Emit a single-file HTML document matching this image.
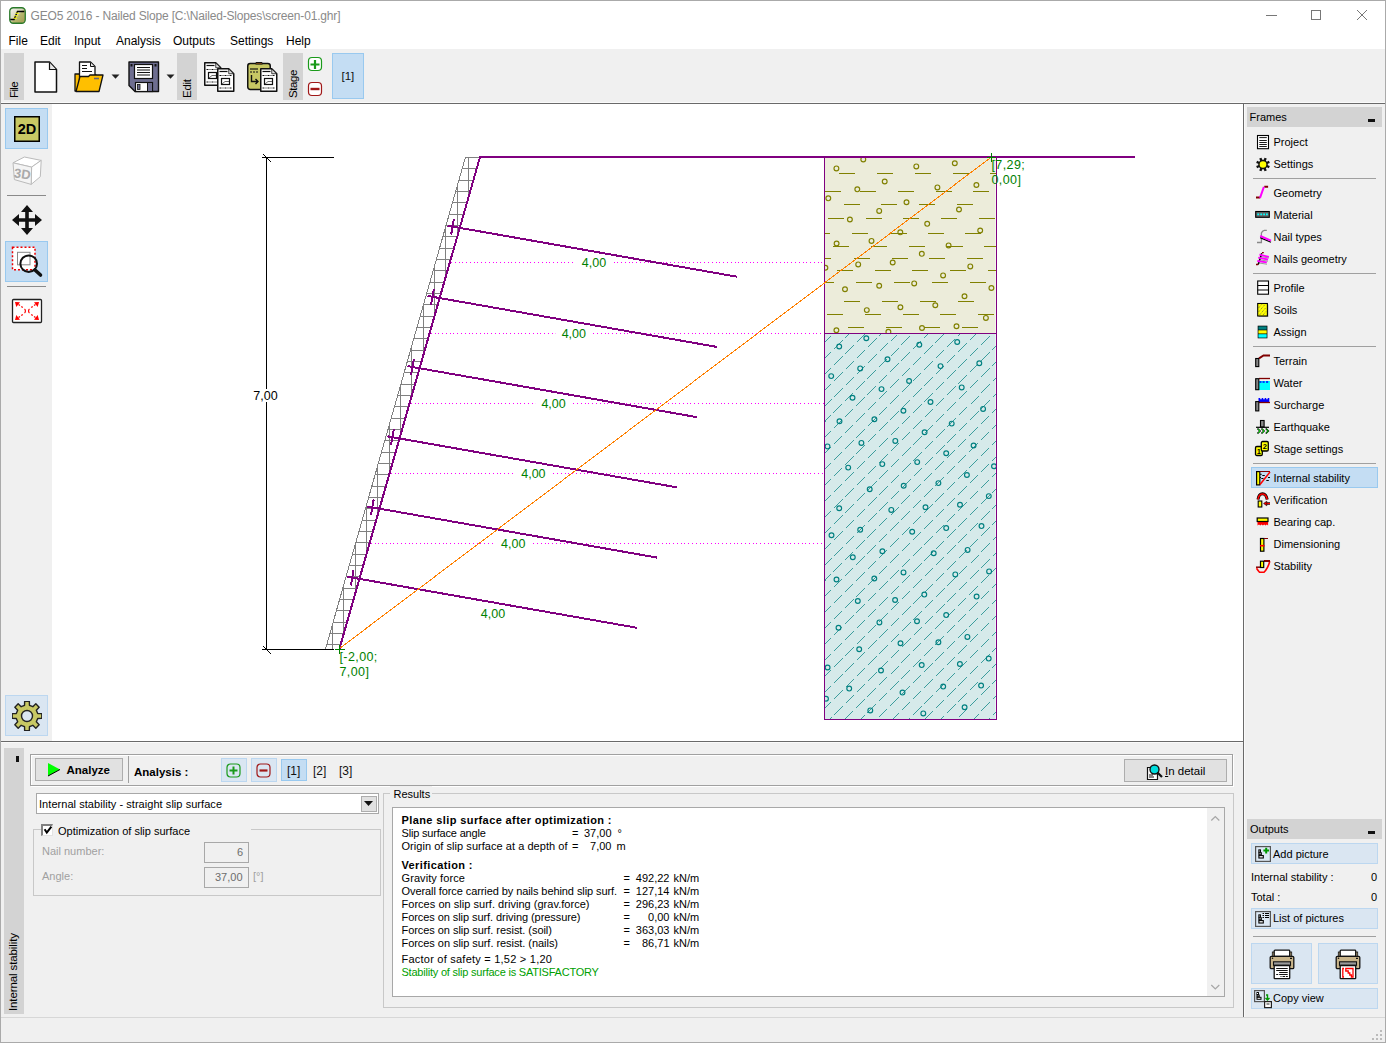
<!DOCTYPE html>
<html><head><meta charset="utf-8"><style>
html,body{margin:0;padding:0;}
body{width:1386px;height:1043px;overflow:hidden;position:relative;background:#f0f0f0;font-family:"Liberation Sans", sans-serif;}
.t{position:absolute;white-space:nowrap;line-height:1;}
</style></head><body>
<div style="position:absolute;left:0px;top:0px;width:1386px;height:49px;background:#fff"></div>
<div style="position:absolute;left:0px;top:0px;width:1386px;height:1px;background:#aaa"></div>
<div style="position:absolute;left:0px;top:0px;width:1px;height:1043px;background:#aaa"></div>
<div style="position:absolute;left:1385px;top:0px;width:1px;height:1043px;background:#aaa"></div>
<div style="position:absolute;left:0px;top:1042px;width:1386px;height:1px;background:#aaa"></div>
<svg style="position:absolute;left:9px;top:7px;" width="17" height="17" viewBox="0 0 17 17"><defs><linearGradient id="tg" x1="0" y1="0" x2="1" y2="1"><stop offset="0" stop-color="#f4f4ee"/><stop offset="0.45" stop-color="#d8d8c0"/><stop offset="0.55" stop-color="#b8b870"/><stop offset="1" stop-color="#a09850"/></linearGradient></defs>
<rect x="0.75" y="0.75" width="15.5" height="15.5" rx="3.5" fill="url(#tg)" stroke="#2a7a2a" stroke-width="1.3"/>
<path d="M1.3 12.5H5L8.5 4.5H15.3" stroke="#000" stroke-width="1.4" fill="none"/>
<path d="M6.5 6.3h3.5 M5.5 8.8h3.5 M4.5 11.2h3.5" stroke="#ffff00" stroke-width="1.1"/></svg>
<div class="t" style="left:30.5px;top:9.84px;font-size:12px;color:#8a8a8a;font-weight:400;letter-spacing:-0.170px;">GEO5 2016 - Nailed Slope [C:\Nailed-Slopes\screen-01.ghr]</div>
<svg style="position:absolute;left:1260px;top:5px;" width="120" height="20" viewBox="0 0 120 20"><path d="M6 10.5h11" stroke="#777" stroke-width="1"/>
<rect x="51.5" y="5.5" width="9" height="9" fill="none" stroke="#777" stroke-width="1"/>
<path d="M97 5l10 10 M107 5l-10 10" stroke="#777" stroke-width="1"/></svg>
<div class="t" style="left:8.5px;top:34.84px;font-size:12px;color:#000;font-weight:400;">File</div>
<div class="t" style="left:40px;top:34.84px;font-size:12px;color:#000;font-weight:400;">Edit</div>
<div class="t" style="left:74px;top:34.84px;font-size:12px;color:#000;font-weight:400;">Input</div>
<div class="t" style="left:116px;top:34.84px;font-size:12px;color:#000;font-weight:400;">Analysis</div>
<div class="t" style="left:173px;top:34.84px;font-size:12px;color:#000;font-weight:400;">Outputs</div>
<div class="t" style="left:230px;top:34.84px;font-size:12px;color:#000;font-weight:400;">Settings</div>
<div class="t" style="left:286px;top:34.84px;font-size:12px;color:#000;font-weight:400;">Help</div>
<div style="position:absolute;left:1px;top:49px;width:1384px;height:54px;background:#f0f0f0"></div>
<div style="position:absolute;left:1px;top:102px;width:1384px;height:1px;background:#fafafa"></div>
<div style="position:absolute;left:1px;top:103px;width:1384px;height:1px;background:#696969"></div>
<div style="position:absolute;left:4px;top:53px;width:20px;height:47px;background:#d3d3d3"></div>
<div class="t" style="left:8.55px;top:97.5px;transform-origin:0 0;transform:rotate(-90deg);font-size:11.5px;color:#000;letter-spacing:-0.644px;">File</div>
<div style="position:absolute;left:177px;top:53px;width:20px;height:47px;background:#d3d3d3"></div>
<div class="t" style="left:181.55px;top:97.5px;transform-origin:0 0;transform:rotate(-90deg);font-size:11.5px;color:#000;letter-spacing:-0.276px;">Edit</div>
<div style="position:absolute;left:283px;top:53px;width:20px;height:47px;background:#d3d3d3"></div>
<div class="t" style="left:287.75px;top:97.5px;transform-origin:0 0;transform:rotate(-90deg);font-size:11.5px;color:#000;letter-spacing:-0.391px;">Stage</div>
<svg style="position:absolute;left:34px;top:61px;" width="24" height="32" viewBox="0 0 24 32"><path d="M1 1h14.5l7 7.5V31H1z" fill="#fff" stroke="#111" stroke-width="1.5" stroke-linejoin="round"/>
<path d="M15.5 1.5v7h6.5" fill="#e8e8e8" stroke="#111" stroke-width="1.2"/></svg>
<svg style="position:absolute;left:74px;top:61px;" width="31" height="32" viewBox="0 0 31 32"><path d="M1 13h5v-1h14v2h2V30H1z" fill="#ffbf00" stroke="#111" stroke-width="1.3" stroke-linejoin="round"/>
<path d="M5.5 1h11l4.5 4.5V20H5.5z" fill="#fff" stroke="#111" stroke-width="1.3" stroke-linejoin="round"/>
<path d="M16.5 1.5v4h4" fill="#e8e8e8" stroke="#111" stroke-width="1"/>
<path d="M8 4.5h5 M8 7.5h5 M8 10.5h10" stroke="#111" stroke-width="1.2"/>
<path d="M2 30.5l4-15h8.5l1.5-1.5h13l-4 16.5z" fill="#ffbf00" stroke="#111" stroke-width="1.3" stroke-linejoin="round"/>
<path d="M20 17.5h5" stroke="#667" stroke-width="1.6"/></svg>
<svg style="position:absolute;left:111px;top:74px;" width="9" height="6" viewBox="0 0 9 6"><path d="M0.5 0.5h8L4.5 4.8z" fill="#222"/></svg>
<svg style="position:absolute;left:128px;top:61px;" width="32" height="32" viewBox="0 0 32 32"><path d="M1 1h29.5v29.5H7L1 24.5z" fill="#6e6e90" stroke="#111" stroke-width="1.4" stroke-linejoin="round"/>
<rect x="6.5" y="3.5" width="18" height="14" fill="#fff" stroke="#111" stroke-width="1.2"/>
<path d="M9 6.5h13 M9 9h13 M9 11.5h13 M9 14h13" stroke="#111" stroke-width="1"/>
<rect x="7.5" y="21.5" width="17" height="9" fill="#fff" stroke="#111" stroke-width="1.2"/>
<rect x="9.5" y="23.5" width="2.5" height="5" fill="#6e6e90" stroke="#111" stroke-width="0.8"/>
<rect x="19.5" y="21.5" width="5" height="9" fill="#6e6e90" stroke="#111" stroke-width="1"/>
<rect x="2.5" y="3" width="2" height="2.5" fill="#111"/><rect x="26.5" y="3" width="2" height="2.5" fill="#111"/></svg>
<svg style="position:absolute;left:166px;top:74px;" width="9" height="6" viewBox="0 0 9 6"><path d="M0.5 0.5h8L4.5 4.8z" fill="#222"/></svg>
<svg style="position:absolute;left:203px;top:61px;" width="33" height="33" viewBox="0 0 33 33"><path d="M1.75 1.75h11l5 5v17.5h-16z" fill="#fff" stroke="#111" stroke-width="1.5" stroke-linejoin="round"/><path d="M12.75 2v4.75h4.75z" fill="#e4e4e4" stroke="#111" stroke-width="0.8"/><path d="M3.5 4.5h8" stroke="#111" stroke-width="1.2"/><path d="M3.5 8.5h12 M3.5 21h12" stroke="#111" stroke-width="1.2" stroke-dasharray="2 1 1 1"/><rect x="5.5" y="11.5" width="8" height="6" fill="#fff" stroke="#111" stroke-width="1.2"/><path d="M6 17l3-2.5h4" fill="none" stroke="#444" stroke-width="0.8"/><path d="M14.75 7.75h11l5 5v17.5h-16z" fill="#fff" stroke="#111" stroke-width="1.5" stroke-linejoin="round"/><path d="M25.75 8v4.75h4.75z" fill="#e4e4e4" stroke="#111" stroke-width="0.8"/><path d="M16.5 10.5h8" stroke="#111" stroke-width="1.2"/><path d="M16.5 14.5h12 M16.5 27h12" stroke="#111" stroke-width="1.2" stroke-dasharray="2 1 1 1"/><rect x="18.5" y="17.5" width="8" height="6" fill="#fff" stroke="#111" stroke-width="1.2"/><path d="M19 23l3-2.5h4" fill="none" stroke="#444" stroke-width="0.8"/></svg>
<svg style="position:absolute;left:246px;top:61px;" width="33" height="33" viewBox="0 0 33 33"><rect x="1.75" y="2.5" width="22.5" height="26" rx="2.5" fill="#c8c864" stroke="#111" stroke-width="1.5"/>
<path d="M9.5 3h7l-0.5-1.5h-6z" fill="#d07010" stroke="#111" stroke-width="1"/>
<path d="M4 8h8" stroke="#111" stroke-width="1.2"/><path d="M4 11h8" stroke="#111" stroke-width="1.2" stroke-dasharray="2 1"/>
<path d="M5.5 14v6.5h6 M9.5 18l2.5 2.5-2.5 2.5" stroke="#111" stroke-width="1.4" fill="none"/><path d="M14.75 7.75h11l5 5v17.5h-16z" fill="#fff" stroke="#111" stroke-width="1.5" stroke-linejoin="round"/><path d="M25.75 8v4.75h4.75z" fill="#e4e4e4" stroke="#111" stroke-width="0.8"/><path d="M16.5 10.5h8" stroke="#111" stroke-width="1.2"/><path d="M16.5 14.5h12 M16.5 27h12" stroke="#111" stroke-width="1.2" stroke-dasharray="2 1 1 1"/><rect x="18.5" y="17.5" width="8" height="6" fill="#fff" stroke="#111" stroke-width="1.2"/><path d="M19 23l3-2.5h4" fill="none" stroke="#444" stroke-width="0.8"/></svg>
<svg style="position:absolute;left:307px;top:56px;" width="16" height="42" viewBox="0 0 16 42"><rect x="1.5" y="1.5" width="13" height="13" rx="3.5" fill="#fff" stroke="#1a9a1a" stroke-width="1.2"/>
<path d="M8 4v9 M3.5 8.5h9" stroke="#1a9a1a" stroke-width="2.2"/>
<rect x="1.5" y="26.5" width="13" height="13" rx="3.5" fill="#fff" stroke="#a01818" stroke-width="1.2"/>
<path d="M3.5 33h9" stroke="#a01818" stroke-width="2.4"/></svg>
<div style="position:absolute;left:332px;top:53px;width:32px;height:46px;background:#c4ddf3;border:1px solid #99c9ef;box-sizing:border-box"></div>
<div class="t" style="left:341.5px;top:71.27px;font-size:11.5px;color:#111;font-weight:400;">[1]</div>
<div style="position:absolute;left:1px;top:104px;width:51px;height:637px;background:#f0f0f0"></div>
<div style="position:absolute;left:5px;top:108px;width:43px;height:41px;background:#c4ddf3;border:1px solid #99c9ef;box-sizing:border-box"></div>
<svg style="position:absolute;left:14px;top:116px;" width="26" height="26" viewBox="0 0 26 26"><rect x="0.75" y="0.75" width="24.5" height="24.5" fill="#c8c864" stroke="#000" stroke-width="1.5"/>
<text x="13" y="18" font-size="14.5" font-weight="700" text-anchor="middle" fill="#000" font-family="Liberation Sans">2D</text></svg>
<svg style="position:absolute;left:8px;top:152px;" width="40" height="40" viewBox="0 0 40 40"><path d="M5 10.8L16.4 5 33.2 8.4 23.6 15.1z" fill="#fff" stroke="#bbb" stroke-width="1"/>
<path d="M23.6 15.1L33.2 8.4 32.3 24.7 23.2 32.4z" fill="#fff" stroke="#bbb" stroke-width="1"/>
<path d="M5 10.8L23.6 15.1 23.2 32.4 6.4 27.6z" fill="#f4f4f4" stroke="#bbb" stroke-width="1"/>
<text x="14.5" y="26.5" font-size="13" font-weight="700" text-anchor="middle" fill="#aaa" font-family="Liberation Sans" transform="rotate(8 14.5 21)">3D</text></svg>
<div style="position:absolute;left:7px;top:195px;width:39px;height:1px;background:#8a8a8a"></div>
<svg style="position:absolute;left:11px;top:204px;" width="32" height="32" viewBox="0 0 32 32"><path d="M16 1l6 7h-4.2v6.2H24V10l7 6-7 6v-4.2h-6.2V24H22l-6 7-6-7h4.2v-6.2H8V22l-7-6 7-6v4.2h6.2V8H10z" fill="#111"/></svg>
<div style="position:absolute;left:5px;top:241px;width:43px;height:41px;background:#c4ddf3;border:1px solid #99c9ef;box-sizing:border-box"></div>
<svg style="position:absolute;left:8px;top:243px;" width="38" height="38" viewBox="0 0 38 38"><rect x="4.5" y="4.2" width="22.5" height="22.5" fill="#fff" stroke="#e00" stroke-width="1.5" stroke-dasharray="2 2"/>
<rect x="9.5" y="9.3" width="12.5" height="12.5" fill="none" stroke="#888" stroke-width="1"/>
<circle cx="20.7" cy="20.7" r="8.3" fill="none" stroke="#111" stroke-width="2"/>
<path d="M27 27l5.5 5" stroke="#111" stroke-width="3.6" stroke-linecap="round"/></svg>
<div style="position:absolute;left:7px;top:286px;width:39px;height:1px;background:#8a8a8a"></div>
<svg style="position:absolute;left:8px;top:295px;" width="38" height="33" viewBox="0 0 38 33"><rect x="4.5" y="4.5" width="29" height="23" rx="1" fill="#fff" stroke="#222" stroke-width="1.3"/>
<path d="M7 7l5 .3-3.7 4.7z M31 7l-5 .3 3.7 4.7z M7 25l5-.3-3.7-4.7z M31 25l-5-.3 3.7-4.7z" fill="#f00"/>
<path d="M10.5 9.5l5 3.5 M27.5 9.5l-5 3.5 M10.5 22.5l5-3.5 M27.5 22.5l-5-3.5" stroke="#f00" stroke-width="1.3" stroke-dasharray="1.8 1.6"/>
<path d="M16.5 14c1.2 0.8 1.2 3.2 0 4 M21.5 14c-1.2 0.8-1.2 3.2 0 4" fill="none" stroke="#f00" stroke-width="1.2"/></svg>
<div style="position:absolute;left:5px;top:695px;width:43px;height:41px;background:#dae6f2;border:1px solid #bcd7f0;box-sizing:border-box"></div>
<svg style="position:absolute;left:12px;top:700.7px;" width="30" height="30" viewBox="0 0 30 30"><polygon points="25.72,12.53 29.82,12.65 29.82,17.35 25.72,17.47 24.33,20.83 27.14,23.82 23.82,27.14 20.83,24.33 17.47,25.72 17.35,29.82 12.65,29.82 12.53,25.72 9.17,24.33 6.18,27.14 2.86,23.82 5.67,20.83 4.28,17.47 0.18,17.35 0.18,12.65 4.28,12.53 5.67,9.17 2.86,6.18 6.18,2.86 9.17,5.67 12.53,4.28 12.65,0.18 17.35,0.18 17.47,4.28 20.83,5.67 23.82,2.86 27.14,6.18 24.33,9.17" fill="#c8c864" stroke="#222" stroke-width="1.4" stroke-linejoin="round"/>
<circle cx="15" cy="15" r="5.5" fill="#dae6f2" stroke="#222" stroke-width="1.4"/></svg>
<div style="position:absolute;left:52px;top:104px;width:1191px;height:637px;background:#fff"></div>
<svg style="position:absolute;left:52px;top:104px" width="1191" height="637" viewBox="52 104 1191 637" font-family="Liberation Sans"><clipPath id="fc"><polygon points="465.5,157.0 479.5,157.0 339.5,649.0 325.5,649.0"/></clipPath>
<g clip-path="url(#fc)"><path d="M320 157.5H485 M320 168.5H485 M320 180.5H485 M320 191.5H485 M320 202.5H485 M320 214.5H485 M320 225.5H485 M320 236.5H485 M320 248.5H485 M320 259.5H485 M320 270.5H485 M320 282.5H485 M320 293.5H485 M320 304.5H485 M320 316.5H485 M320 327.5H485 M320 338.5H485 M320 350.5H485 M320 361.5H485 M320 372.5H485 M320 384.5H485 M320 395.5H485 M320 406.5H485 M320 418.5H485 M320 429.5H485 M320 440.5H485 M320 452.5H485 M320 463.5H485 M320 474.5H485 M320 486.5H485 M320 497.5H485 M320 508.5H485 M320 520.5H485 M320 531.5H485 M320 542.5H485 M320 554.5H485 M320 565.5H485 M320 576.5H485 M320 588.5H485 M320 599.5H485 M320 610.5H485 M320 622.5H485 M320 633.5H485 M320 644.5H485 M468.5 150V650 M457.5 150V650 M445.5 150V650 M434.5 150V650 M423.5 150V650 M411.5 150V650 M400.5 150V650 M389.5 150V650 M377.5 150V650 M366.5 150V650 M355.5 150V650 M343.5 150V650 M332.5 150V650 M321.5 150V650" stroke="#808080" stroke-width="1" fill="none" shape-rendering="crispEdges"/></g>
<line x1="465.5" y1="157.0" x2="325.5" y2="649.0" stroke="#808080" stroke-width="1" shape-rendering="crispEdges"/>
<path d="M465 157.5H480" stroke="#808080" stroke-width="1" shape-rendering="crispEdges"/>
<path d="M262 157.5H334 M262 649.5H334 M266.5 157V650" stroke="#000" stroke-width="1" fill="none" shape-rendering="crispEdges"/>
<path d="M263 154L271 162 M263 646L271 654" stroke="#000" stroke-width="1" shape-rendering="crispEdges"/>
<rect x="252" y="389" width="27" height="13" fill="#fff"/>
<text x="265.5" y="400" font-size="12.5" text-anchor="middle" fill="#000">7,00</text>
<rect x="824.5" y="157" width="171" height="176.5" fill="#ececda"/>
<rect x="824.5" y="333.5" width="171" height="386" fill="#d6eaea"/>
<clipPath id="s1"><rect x="825" y="158" width="171" height="175"/></clipPath>
<g clip-path="url(#s1)" stroke="#808000" fill="none" stroke-width="1">
<path d="M839 173.5h16 M877 173.5h16 M915 173.5h16 M953 173.5h16 M990 173.5h16 M825 191.5h16 M860 191.5h16 M898 191.5h16 M936 191.5h16 M973 191.5h16 M844 204.5h16 M881 204.5h16 M919 204.5h16 M957 204.5h16 M828 218.5h16 M866 218.5h16 M903 218.5h16 M941 218.5h16 M979 218.5h16 M852 233.5h16 M891 233.5h16 M928 233.5h16 M965 233.5h16 M833 246.5h16 M871 246.5h16 M909 246.5h16 M947 246.5h16 M984 246.5h16 M854 258.5h16 M892 258.5h16 M929 258.5h16 M967 258.5h16 M837 270.5h16 M875 270.5h16 M912 270.5h16 M950 270.5h16 M988 270.5h16 M856 282.5h16 M894 282.5h16 M932 282.5h16 M970 282.5h16 M844 301.5h16 M882 301.5h16 M920 301.5h16 M958 301.5h16 M827 314.5h16 M865 314.5h16 M903 314.5h16 M940 314.5h16 M978 314.5h16 M848 327.5h16 M886 327.5h16 M924 327.5h16 M962 327.5h16 M825 233.5H830 M825 258.5H831 M825 282.5H834" shape-rendering="crispEdges"/>
<circle cx="863.3" cy="159.5" r="2.4" stroke-width="1.15"/>
<circle cx="836.4" cy="168.4" r="2.4" stroke-width="1.15"/>
<circle cx="916.3" cy="166.4" r="2.4" stroke-width="1.15"/>
<circle cx="954.8" cy="163.2" r="2.4" stroke-width="1.15"/>
<circle cx="884.7" cy="181.5" r="2.4" stroke-width="1.15"/>
<circle cx="857.3" cy="189.3" r="2.4" stroke-width="1.15"/>
<circle cx="937.4" cy="187.4" r="2.4" stroke-width="1.15"/>
<circle cx="976.4" cy="185" r="2.4" stroke-width="1.15"/>
<circle cx="828.3" cy="198.3" r="2.4" stroke-width="1.15"/>
<circle cx="906.5" cy="202.2" r="2.4" stroke-width="1.15"/>
<circle cx="879.2" cy="210.9" r="2.4" stroke-width="1.15"/>
<circle cx="959" cy="209.5" r="2.4" stroke-width="1.15"/>
<circle cx="849.9" cy="219.5" r="2.4" stroke-width="1.15"/>
<circle cx="927.2" cy="223.8" r="2.4" stroke-width="1.15"/>
<circle cx="900.3" cy="232.3" r="2.4" stroke-width="1.15"/>
<circle cx="980.2" cy="230.5" r="2.4" stroke-width="1.15"/>
<circle cx="836.6" cy="243.5" r="2.4" stroke-width="1.15"/>
<circle cx="871.5" cy="240.9" r="2.4" stroke-width="1.15"/>
<circle cx="948.6" cy="245.4" r="2.4" stroke-width="1.15"/>
<circle cx="921.8" cy="253.8" r="2.4" stroke-width="1.15"/>
<circle cx="892.7" cy="262.5" r="2.4" stroke-width="1.15"/>
<circle cx="858.2" cy="264.4" r="2.4" stroke-width="1.15"/>
<circle cx="970.3" cy="266.4" r="2.4" stroke-width="1.15"/>
<circle cx="825.4" cy="267.8" r="2.4" stroke-width="1.15"/>
<circle cx="943.1" cy="275.4" r="2.4" stroke-width="1.15"/>
<circle cx="845" cy="289.2" r="2.4" stroke-width="1.15"/>
<circle cx="879.2" cy="285.8" r="2.4" stroke-width="1.15"/>
<circle cx="914.2" cy="283.4" r="2.4" stroke-width="1.15"/>
<circle cx="991.4" cy="288" r="2.4" stroke-width="1.15"/>
<circle cx="964.5" cy="296.3" r="2.4" stroke-width="1.15"/>
<circle cx="935.3" cy="305.3" r="2.4" stroke-width="1.15"/>
<circle cx="900.4" cy="307.3" r="2.4" stroke-width="1.15"/>
<circle cx="866.8" cy="310.1" r="2.4" stroke-width="1.15"/>
<circle cx="985.9" cy="317.9" r="2.4" stroke-width="1.15"/>
<circle cx="836.4" cy="330.3" r="2.4" stroke-width="1.15"/>
<circle cx="888.4" cy="331.7" r="2.4" stroke-width="1.15"/>
<circle cx="922" cy="328" r="2.4" stroke-width="1.15"/>
<circle cx="956.5" cy="326.3" r="2.4" stroke-width="1.15"/>
</g>
<clipPath id="s2"><rect x="825" y="334" width="171" height="385"/></clipPath>
<g clip-path="url(#s2)" stroke="#008080" fill="none" stroke-width="1">
<path d="M800 -110L1020 -330 M800 -94.1L1020 -314.1 M800 -78.2L1020 -298.2 M800 -62.3L1020 -282.3 M800 -46.4L1020 -266.4 M800 -30.5L1020 -250.5 M800 -14.6L1020 -234.6 M800 1.3L1020 -218.7 M800 17.2L1020 -202.8 M800 33.1L1020 -186.9 M800 49L1020 -171 M800 64.9L1020 -155.1 M800 80.8L1020 -139.2 M800 96.7L1020 -123.3 M800 112.6L1020 -107.4 M800 128.5L1020 -91.5 M800 144.4L1020 -75.6 M800 160.3L1020 -59.7 M800 176.2L1020 -43.8 M800 192.1L1020 -27.9 M800 208L1020 -12 M800 223.9L1020 3.9 M800 239.8L1020 19.8 M800 255.7L1020 35.7 M800 271.6L1020 51.6 M800 287.5L1020 67.5 M800 303.4L1020 83.4 M800 319.3L1020 99.3 M800 335.2L1020 115.2 M800 351.1L1020 131.1 M800 367L1020 147 M800 382.9L1020 162.9 M800 398.8L1020 178.8 M800 414.7L1020 194.7 M800 430.6L1020 210.6 M800 446.5L1020 226.5 M800 462.4L1020 242.4 M800 478.3L1020 258.3 M800 494.2L1020 274.2 M800 510.1L1020 290.1 M800 526L1020 306 M800 541.9L1020 321.9 M800 557.8L1020 337.8 M800 573.7L1020 353.7 M800 589.6L1020 369.6 M800 605.5L1020 385.5 M800 621.4L1020 401.4 M800 637.3L1020 417.3 M800 653.2L1020 433.2 M800 669.1L1020 449.1 M800 685L1020 465 M800 700.9L1020 480.9 M800 716.8L1020 496.8 M800 732.7L1020 512.7 M800 748.6L1020 528.6 M800 764.5L1020 544.5 M800 780.4L1020 560.4 M800 796.3L1020 576.3 M800 812.2L1020 592.2 M800 828.1L1020 608.1 M800 844L1020 624 M800 859.9L1020 639.9 M800 875.8L1020 655.8 M800 891.7L1020 671.7 M800 907.6L1020 687.6 M800 923.5L1020 703.5 M800 939.4L1020 719.4 M800 955.3L1020 735.3 M800 971.2L1020 751.2 M800 987.1L1020 767.1 M800 1003L1020 783 M800 1018.9L1020 798.9 M800 1034.8L1020 814.8 M800 1050.7L1020 830.7 M800 1066.6L1020 846.6 M800 1082.5L1020 862.5 M800 1098.4L1020 878.4 M800 1114.3L1020 894.3 M800 1130.2L1020 910.2 M800 1146.1L1020 926.1 M800 1162L1020 942 M800 1177.9L1020 957.9 M800 1193.8L1020 973.8 M800 1209.7L1020 989.7 M800 1225.6L1020 1005.6 M800 1241.5L1020 1021.5 M800 1257.4L1020 1037.4 M800 1273.3L1020 1053.3 M800 1289.2L1020 1069.2 M800 1305.1L1020 1085.1" stroke-dasharray="12 4" stroke-width="0.72" shape-rendering="crispEdges"/>
<circle cx="839.2" cy="346.5" r="2.4" stroke-width="1.15"/>
<circle cx="866.3" cy="338.2" r="2.4" stroke-width="1.15"/>
<circle cx="887.5" cy="359.2" r="2.4" stroke-width="1.15"/>
<circle cx="919.3" cy="344.7" r="2.4" stroke-width="1.15"/>
<circle cx="957.2" cy="342" r="2.4" stroke-width="1.15"/>
<circle cx="860.2" cy="368.4" r="2.4" stroke-width="1.15"/>
<circle cx="831.2" cy="376.1" r="2.4" stroke-width="1.15"/>
<circle cx="940.5" cy="366.1" r="2.4" stroke-width="1.15"/>
<circle cx="979.3" cy="363.2" r="2.4" stroke-width="1.15"/>
<circle cx="909.1" cy="381" r="2.4" stroke-width="1.15"/>
<circle cx="881.5" cy="389.1" r="2.4" stroke-width="1.15"/>
<circle cx="961.7" cy="387.4" r="2.4" stroke-width="1.15"/>
<circle cx="852.5" cy="397.7" r="2.4" stroke-width="1.15"/>
<circle cx="930.5" cy="402" r="2.4" stroke-width="1.15"/>
<circle cx="903.4" cy="410.7" r="2.4" stroke-width="1.15"/>
<circle cx="983.1" cy="408.9" r="2.4" stroke-width="1.15"/>
<circle cx="839.5" cy="421.3" r="2.4" stroke-width="1.15"/>
<circle cx="874.4" cy="419.3" r="2.4" stroke-width="1.15"/>
<circle cx="951.7" cy="423.6" r="2.4" stroke-width="1.15"/>
<circle cx="924.6" cy="432.2" r="2.4" stroke-width="1.15"/>
<circle cx="827.5" cy="446.4" r="2.4" stroke-width="1.15"/>
<circle cx="861.4" cy="442.9" r="2.4" stroke-width="1.15"/>
<circle cx="895.3" cy="440.9" r="2.4" stroke-width="1.15"/>
<circle cx="973.6" cy="445.5" r="2.4" stroke-width="1.15"/>
<circle cx="946.2" cy="453.3" r="2.4" stroke-width="1.15"/>
<circle cx="848.2" cy="467.6" r="2.4" stroke-width="1.15"/>
<circle cx="882.3" cy="464.1" r="2.4" stroke-width="1.15"/>
<circle cx="917.2" cy="462.1" r="2.4" stroke-width="1.15"/>
<circle cx="994" cy="466.2" r="2.4" stroke-width="1.15"/>
<circle cx="966.9" cy="475" r="2.4" stroke-width="1.15"/>
<circle cx="938.4" cy="483.1" r="2.4" stroke-width="1.15"/>
<circle cx="903.7" cy="485.7" r="2.4" stroke-width="1.15"/>
<circle cx="869.7" cy="489.2" r="2.4" stroke-width="1.15"/>
<circle cx="988.8" cy="496.1" r="2.4" stroke-width="1.15"/>
<circle cx="960" cy="504.7" r="2.4" stroke-width="1.15"/>
<circle cx="839.2" cy="508.2" r="2.4" stroke-width="1.15"/>
<circle cx="891.3" cy="509.9" r="2.4" stroke-width="1.15"/>
<circle cx="925.5" cy="507.3" r="2.4" stroke-width="1.15"/>
<circle cx="831.5" cy="535.2" r="2.4" stroke-width="1.15"/>
<circle cx="860.2" cy="529.7" r="2.4" stroke-width="1.15"/>
<circle cx="912.2" cy="531.7" r="2.4" stroke-width="1.15"/>
<circle cx="946.2" cy="528.1" r="2.4" stroke-width="1.15"/>
<circle cx="981.5" cy="526.1" r="2.4" stroke-width="1.15"/>
<circle cx="852.8" cy="557.3" r="2.4" stroke-width="1.15"/>
<circle cx="882.4" cy="551.3" r="2.4" stroke-width="1.15"/>
<circle cx="933.7" cy="553.3" r="2.4" stroke-width="1.15"/>
<circle cx="967.6" cy="549.9" r="2.4" stroke-width="1.15"/>
<circle cx="836.5" cy="579.5" r="2.4" stroke-width="1.15"/>
<circle cx="874.3" cy="578.5" r="2.4" stroke-width="1.15"/>
<circle cx="903.5" cy="572.4" r="2.4" stroke-width="1.15"/>
<circle cx="955.3" cy="574.4" r="2.4" stroke-width="1.15"/>
<circle cx="989.1" cy="571.4" r="2.4" stroke-width="1.15"/>
<circle cx="857.8" cy="601" r="2.4" stroke-width="1.15"/>
<circle cx="895.1" cy="600" r="2.4" stroke-width="1.15"/>
<circle cx="924.3" cy="594.6" r="2.4" stroke-width="1.15"/>
<circle cx="976.6" cy="596.6" r="2.4" stroke-width="1.15"/>
<circle cx="838.5" cy="627.8" r="2.4" stroke-width="1.15"/>
<circle cx="879.4" cy="622.4" r="2.4" stroke-width="1.15"/>
<circle cx="917" cy="621.2" r="2.4" stroke-width="1.15"/>
<circle cx="946.2" cy="615.1" r="2.4" stroke-width="1.15"/>
<circle cx="859.2" cy="649.3" r="2.4" stroke-width="1.15"/>
<circle cx="900.5" cy="643.3" r="2.4" stroke-width="1.15"/>
<circle cx="938.4" cy="642.3" r="2.4" stroke-width="1.15"/>
<circle cx="967.4" cy="636.9" r="2.4" stroke-width="1.15"/>
<circle cx="827.6" cy="667.5" r="2.4" stroke-width="1.15"/>
<circle cx="881" cy="670.5" r="2.4" stroke-width="1.15"/>
<circle cx="921.7" cy="665.1" r="2.4" stroke-width="1.15"/>
<circle cx="959.9" cy="664" r="2.4" stroke-width="1.15"/>
<circle cx="988.7" cy="658.6" r="2.4" stroke-width="1.15"/>
<circle cx="849.2" cy="688.6" r="2.4" stroke-width="1.15"/>
<circle cx="902.5" cy="692.6" r="2.4" stroke-width="1.15"/>
<circle cx="943.2" cy="686.6" r="2.4" stroke-width="1.15"/>
<circle cx="981.1" cy="685.6" r="2.4" stroke-width="1.15"/>
<circle cx="826" cy="698.7" r="2.4" stroke-width="1.15"/>
<circle cx="870.3" cy="710.4" r="2.4" stroke-width="1.15"/>
<circle cx="923.3" cy="713.4" r="2.4" stroke-width="1.15"/>
<circle cx="964.6" cy="707.3" r="2.4" stroke-width="1.15"/>
</g>
<path d="M824.5 157V720 M996.5 157V720 M824 719.5H997 M824 333.5H997" stroke="#800080" stroke-width="1" fill="none" shape-rendering="crispEdges"/>
<line x1="451" y1="262.5" x2="824" y2="262.5" stroke="#ff00ff" stroke-width="1" stroke-dasharray="1 2.78" shape-rendering="crispEdges"/>
<line x1="430.72" y1="333.5" x2="824" y2="333.5" stroke="#ff00ff" stroke-width="1" stroke-dasharray="1 2.78" shape-rendering="crispEdges"/>
<line x1="410.72" y1="403.5" x2="824" y2="403.5" stroke="#ff00ff" stroke-width="1" stroke-dasharray="1 2.78" shape-rendering="crispEdges"/>
<line x1="390.72" y1="473.5" x2="824" y2="473.5" stroke="#ff00ff" stroke-width="1" stroke-dasharray="1 2.78" shape-rendering="crispEdges"/>
<line x1="370.72" y1="543.5" x2="824" y2="543.5" stroke="#ff00ff" stroke-width="1" stroke-dasharray="1 2.78" shape-rendering="crispEdges"/>
<path d="M479 157H1134.5" stroke="#800080" stroke-width="2" fill="none" shape-rendering="crispEdges"/>
<line x1="480" y1="157" x2="339.5" y2="648.5" stroke="#800080" stroke-width="2" shape-rendering="crispEdges"/>
<line x1="447.62" y1="225.72" x2="737.45" y2="276.82" stroke="#800080" stroke-width="2" shape-rendering="crispEdges"/>
<line x1="453.94" y1="218.71" x2="451.16" y2="234.46" stroke="#800080" stroke-width="2" shape-rendering="crispEdges"/>
<rect x="575.5" y="256" width="37" height="12" fill="#fff"/>
<text x="594" y="266.5" font-size="12.5" text-anchor="middle" fill="#008000">4,00</text>
<line x1="427.56" y1="295.92" x2="717.39" y2="347.02" stroke="#800080" stroke-width="2" shape-rendering="crispEdges"/>
<line x1="433.88" y1="288.91" x2="431.1" y2="304.66" stroke="#800080" stroke-width="2" shape-rendering="crispEdges"/>
<rect x="555.3" y="327" width="37" height="12" fill="#fff"/>
<text x="573.8" y="337.5" font-size="12.5" text-anchor="middle" fill="#008000">4,00</text>
<line x1="407.5" y1="366.12" x2="697.33" y2="417.22" stroke="#800080" stroke-width="2" shape-rendering="crispEdges"/>
<line x1="413.82" y1="359.11" x2="411.04" y2="374.86" stroke="#800080" stroke-width="2" shape-rendering="crispEdges"/>
<rect x="535.1" y="397" width="37" height="12" fill="#fff"/>
<text x="553.6" y="407.5" font-size="12.5" text-anchor="middle" fill="#008000">4,00</text>
<line x1="387.44" y1="436.32" x2="677.27" y2="487.42" stroke="#800080" stroke-width="2" shape-rendering="crispEdges"/>
<line x1="393.76" y1="429.31" x2="390.98" y2="445.06" stroke="#800080" stroke-width="2" shape-rendering="crispEdges"/>
<rect x="514.9" y="467" width="37" height="12" fill="#fff"/>
<text x="533.4" y="477.5" font-size="12.5" text-anchor="middle" fill="#008000">4,00</text>
<line x1="367.38" y1="506.52" x2="657.21" y2="557.62" stroke="#800080" stroke-width="2" shape-rendering="crispEdges"/>
<line x1="373.7" y1="499.51" x2="370.92" y2="515.26" stroke="#800080" stroke-width="2" shape-rendering="crispEdges"/>
<rect x="494.7" y="537" width="37" height="12" fill="#fff"/>
<text x="513.2" y="547.5" font-size="12.5" text-anchor="middle" fill="#008000">4,00</text>
<line x1="347.32" y1="576.72" x2="637.15" y2="627.82" stroke="#800080" stroke-width="2" shape-rendering="crispEdges"/>
<line x1="353.64" y1="569.71" x2="350.86" y2="585.46" stroke="#800080" stroke-width="2" shape-rendering="crispEdges"/>
<rect x="474.5" y="607" width="37" height="12" fill="#fff"/>
<text x="493" y="617.5" font-size="12.5" text-anchor="middle" fill="#008000">4,00</text>
<line x1="339.5" y1="648.5" x2="991.5" y2="157" stroke="#ff8000" stroke-width="1" shape-rendering="crispEdges"/>
<path d="M335 649.5H345 M339.5 645V654 M987 157.5H996 M991.5 153V162" stroke="#008000" stroke-width="1" fill="none" shape-rendering="crispEdges"/>
<text font-size="12.5" fill="#008000" letter-spacing="0.4"><tspan x="339.5" y="661">[-2,00;</tspan><tspan x="339.5" y="676">7,00]</tspan></text>
<text font-size="12.5" fill="#008000" letter-spacing="0.4"><tspan x="991.5" y="168.8">[7,29;</tspan><tspan x="991.5" y="183.8">0,00]</tspan></text></svg>
<div style="position:absolute;left:1243px;top:104px;width:1px;height:913px;background:#696969"></div>
<div style="position:absolute;left:1244px;top:104px;width:1px;height:913px;background:#fafafa"></div>
<div style="position:absolute;left:1245px;top:104px;width:140px;height:913px;background:#f0f0f0"></div>
<div style="position:absolute;left:1247px;top:107px;width:135px;height:20px;background:#d3d3d3"></div>
<div class="t" style="left:1249.5px;top:112.19px;font-size:11px;color:#000;font-weight:400;">Frames</div>
<div style="position:absolute;left:1368px;top:119px;width:7px;height:2.5px;background:#111"></div>
<svg style="position:absolute;left:1256px;top:135px;overflow:visible" width="16" height="16" viewBox="0 0 16 16"><rect x="1.5" y="0.5" width="11" height="13.2" fill="#fff" stroke="#000" stroke-width="1.1"/><path d="M3.3 2.6h7.5 M3.3 5.5h7.5 M3.3 7.5h7.5 M3.3 9.5h7.5 M3.3 11.5h7.5" stroke="#000" stroke-width="0.9"/></svg>
<div class="t" style="left:1273.5px;top:136.99px;font-size:11px;color:#000;font-weight:400;">Project</div>
<svg style="position:absolute;left:1256px;top:157px;overflow:visible" width="16" height="16" viewBox="0 0 16 16"><polygon points="11.75,8.21 13.83,9.02 12.90,11.26 10.86,10.36 9.86,11.36 10.76,13.40 8.52,14.33 7.71,12.25 6.29,12.25 5.48,14.33 3.24,13.40 4.14,11.36 3.14,10.36 1.10,11.26 0.17,9.02 2.25,8.21 2.25,6.79 0.17,5.98 1.10,3.74 3.14,4.64 4.14,3.64 3.24,1.60 5.48,0.67 6.29,2.75 7.71,2.75 8.52,0.67 10.76,1.60 9.86,3.64 10.86,4.64 12.90,3.74 13.83,5.98 11.75,6.79" fill="#111"/><circle cx="7" cy="7.5" r="3.3" fill="#ff0"/></svg>
<div class="t" style="left:1273.5px;top:158.99px;font-size:11px;color:#000;font-weight:400;">Settings</div>
<div style="position:absolute;left:1253px;top:178px;width:123px;height:1px;background:#a0a0a0"></div>
<svg style="position:absolute;left:1256px;top:186px;overflow:visible" width="16" height="16" viewBox="0 0 16 16"><path d="M0 11.6h4.2 M8.3 0.7h3.8" stroke="#800000" stroke-width="2"/><path d="M4 11.8L7.9 0.8" stroke="#f0f" stroke-width="2"/></svg>
<div class="t" style="left:1273.5px;top:187.99px;font-size:11px;color:#000;font-weight:400;">Geometry</div>
<svg style="position:absolute;left:1256px;top:208px;overflow:visible" width="16" height="16" viewBox="0 0 16 16"><rect x="-0.3" y="3.5" width="13.6" height="5.8" fill="#666" stroke="#000" stroke-width="1.1"/><path d="M1.3 6.4h1.8 M4.3 6.4h1.8 M7.2 6.4h1.8 M10 6.4h1.8" stroke="#0ff" stroke-width="1.8"/></svg>
<div class="t" style="left:1273.5px;top:209.99px;font-size:11px;color:#000;font-weight:400;">Material</div>
<svg style="position:absolute;left:1256px;top:230px;overflow:visible" width="16" height="16" viewBox="0 0 16 16"><path d="M1 12.5h4.4V3c0.5-1.5 1.5-2.5 3-2.7h2.4" fill="none" stroke="#888" stroke-width="1.3"/><path d="M4.2 7.6l10.8 4.7" stroke="#000" stroke-width="1.2"/><path d="M4.2 6l10.8 4.7" stroke="#f0f" stroke-width="2"/></svg>
<div class="t" style="left:1273.5px;top:231.99px;font-size:11px;color:#000;font-weight:400;">Nail types</div>
<svg style="position:absolute;left:1256px;top:252px;overflow:visible" width="16" height="16" viewBox="0 0 16 16"><path d="M5 4.6l8 1.4 M4 7.8l8 1.4 M3 11l8 1.2" stroke="#999" stroke-width="1"/><path d="M2.2 12.5L5.7 1.2" stroke="#000" stroke-width="1.5"/><path d="M0 12.5h2.2 M6 0.6h1.8" stroke="#800000" stroke-width="1.3"/><path d="M3.4 2.7L12.9 4.8 M2.2 5.7L12 7.5 M1.3 9L10.8 10.4" stroke="#f0f" stroke-width="1.8"/></svg>
<div class="t" style="left:1273.5px;top:253.99px;font-size:11px;color:#000;font-weight:400;">Nails geometry</div>
<div style="position:absolute;left:1253px;top:273px;width:123px;height:1px;background:#a0a0a0"></div>
<svg style="position:absolute;left:1256px;top:281px;overflow:visible" width="16" height="16" viewBox="0 0 16 16"><rect x="1.7" y="0" width="10.8" height="13.2" fill="#fff" stroke="#000" stroke-width="1.1"/><path d="M1.7 4.5h10.8 M1.7 9h10.8" stroke="#000" stroke-width="1"/></svg>
<div class="t" style="left:1273.5px;top:282.99px;font-size:11px;color:#000;font-weight:400;">Profile</div>
<svg style="position:absolute;left:1256px;top:303px;overflow:visible" width="16" height="16" viewBox="0 0 16 16"><rect x="2.7" y="1.5" width="9.7" height="12.5" fill="#777" opacity="0.6"/><rect x="1.7" y="0.5" width="9.7" height="12.5" fill="#ff0" stroke="#000" stroke-width="1.1"/><path d="M2.5 5l3-3.5 M2.5 9l6.5-7.5 M3.5 12l6.5-7.5 M7 12l3-3.5" stroke="#555" stroke-width="0.8" stroke-dasharray="1 1"/></svg>
<div class="t" style="left:1273.5px;top:304.99px;font-size:11px;color:#000;font-weight:400;">Soils</div>
<svg style="position:absolute;left:1256px;top:325px;overflow:visible" width="16" height="16" viewBox="0 0 16 16"><rect x="1.7" y="0.7" width="9.7" height="12.6" fill="#000"/><rect x="2.4" y="1.4" width="8.3" height="3.2" fill="#008080"/><rect x="2.4" y="5.3" width="8.3" height="3.2" fill="#ff0"/><rect x="2.4" y="9.2" width="8.3" height="3.4" fill="#0ff"/></svg>
<div class="t" style="left:1273.5px;top:326.99px;font-size:11px;color:#000;font-weight:400;">Assign</div>
<div style="position:absolute;left:1253px;top:346px;width:123px;height:1px;background:#a0a0a0"></div>
<svg style="position:absolute;left:1256px;top:354px;overflow:visible" width="16" height="16" viewBox="0 0 16 16"><rect x="-0.3" y="4.5" width="3.1" height="8.1" fill="#888" stroke="#000" stroke-width="1.1"/><path d="M3 4.3L7.5 1.5H14" fill="none" stroke="#800000" stroke-width="2"/></svg>
<div class="t" style="left:1273.5px;top:355.99px;font-size:11px;color:#000;font-weight:400;">Terrain</div>
<svg style="position:absolute;left:1256px;top:376px;overflow:visible" width="16" height="16" viewBox="0 0 16 16"><rect x="3" y="5" width="11" height="9" fill="#0ff"/><path d="M3 2.5h11" stroke="#800000" stroke-width="1.3"/><path d="M3.5 6h2 M6.5 6h2.2 M10 6h2.2" stroke="#00f" stroke-width="1.6"/><rect x="-0.3" y="2.7" width="3.1" height="11" fill="#888" stroke="#000" stroke-width="1.1"/></svg>
<div class="t" style="left:1273.5px;top:377.99px;font-size:11px;color:#000;font-weight:400;">Water</div>
<svg style="position:absolute;left:1256px;top:398px;overflow:visible" width="16" height="16" viewBox="0 0 16 16"><path d="M2.5 4V0h1.7v1.3h1.5V0h1.5v1.3h1.5V0h1.5v1.3h1.5V0h1.6v4z" fill="#00f"/><path d="M3 4.5h11" stroke="#800000" stroke-width="1.3"/><rect x="-0.3" y="3.6" width="3.1" height="9.3" fill="#888" stroke="#000" stroke-width="1.1"/></svg>
<div class="t" style="left:1273.5px;top:399.99px;font-size:11px;color:#000;font-weight:400;">Surcharge</div>
<svg style="position:absolute;left:1256px;top:420px;overflow:visible" width="16" height="16" viewBox="0 0 16 16"><rect x="4.5" y="0.5" width="3.6" height="6.5" fill="#888" stroke="#000" stroke-width="1.1"/><path d="M0 7.3h13" stroke="#000" stroke-width="1.2"/><path d="M1.5 8.5l2.5 2.5-2.5 2.5 M5.5 8.5l2.5 2.5-2.5 2.5 M9.8 8.5l2.5 2.5-2.5 2.5" fill="none" stroke="#000" stroke-width="1.6"/><path d="M2 8.8l2 2.2-2 2.2 M6 8.8l2 2.2-2 2.2 M10.3 8.8l2 2.2-2 2.2" fill="none" stroke="#0e0" stroke-width="0.9"/></svg>
<div class="t" style="left:1273.5px;top:421.99px;font-size:11px;color:#000;font-weight:400;">Earthquake</div>
<svg style="position:absolute;left:1256px;top:442px;overflow:visible" width="16" height="16" viewBox="0 0 16 16"><rect x="-0.5" y="4.5" width="6.8" height="9" rx="1.3" fill="#ff0" stroke="#000" stroke-width="1.3"/><rect x="5.3" y="-0.5" width="7" height="9.5" rx="1.3" fill="#ff0" stroke="#000" stroke-width="1.3"/><text x="2.8" y="12.3" font-size="7.5" font-weight="700" text-anchor="middle" font-family="Liberation Sans">1</text><text x="8.8" y="6.8" font-size="7.5" font-weight="700" text-anchor="middle" font-family="Liberation Sans">2</text></svg>
<div class="t" style="left:1273.5px;top:443.99px;font-size:11px;color:#000;font-weight:400;">Stage settings</div>
<div style="position:absolute;left:1253px;top:463px;width:123px;height:1px;background:#a0a0a0"></div>
<div style="position:absolute;left:1251px;top:467px;width:127px;height:21px;background:#c4ddf3;border:1px solid #99c9ef;box-sizing:border-box"></div>
<svg style="position:absolute;left:1256px;top:471px;overflow:visible" width="16" height="16" viewBox="0 0 16 16"><rect x="0.6" y="0.6" width="3.2" height="13.3" fill="#ff0" stroke="#000" stroke-width="1.2"/><path d="M3.8 0.5H14" stroke="#800000" stroke-width="1"/><path d="M4 3.3h1.7 M6.3 4.5h2.5 M4 6.5h1 M5.3 7.5h2.2 M12 6.5h2 M10.3 9.5h2.5" stroke="#000" stroke-width="1"/><path d="M14 1L4 13.5" stroke="#f00" stroke-width="1.5"/></svg>
<div class="t" style="left:1273.5px;top:472.99px;font-size:11px;color:#000;font-weight:400;">Internal stability</div>
<svg style="position:absolute;left:1256px;top:493px;overflow:visible" width="16" height="16" viewBox="0 0 16 16"><path d="M2 6.5C2.5 3 4.5 0.8 6.5 0.8S10.5 3 11.2 6.5" fill="none" stroke="#000" stroke-width="3"/><path d="M2 6.3C2.5 3 4.5 1 6.5 1S10.5 3 11.2 6.3" fill="none" stroke="#f00" stroke-width="1.6"/><rect x="2.2" y="8" width="3.6" height="6" fill="#ff0" stroke="#000" stroke-width="1.1"/><path d="M14 10.5H9.5" stroke="#000" stroke-width="2.4"/><path d="M14 10.5H9.5" stroke="#f00" stroke-width="1.2"/><path d="M10.8 8.2L7.6 10.5l3.2 2.3z" fill="#f00" stroke="#000" stroke-width="0.6"/></svg>
<div class="t" style="left:1273.5px;top:494.99px;font-size:11px;color:#000;font-weight:400;">Verification</div>
<svg style="position:absolute;left:1256px;top:515px;overflow:visible" width="16" height="16" viewBox="0 0 16 16"><path d="M1.5 6.8h10.6v3.6l-1.3-1-1.3 1-1.3-1-1.3 1-1.3-1-1.3 1-1.3-1-1.5 1z" fill="#f00"/><rect x="1.2" y="3" width="10.8" height="3.5" fill="#ff0" stroke="#000" stroke-width="1.2"/></svg>
<div class="t" style="left:1273.5px;top:516.99px;font-size:11px;color:#000;font-weight:400;">Bearing cap.</div>
<svg style="position:absolute;left:1256px;top:537px;overflow:visible" width="16" height="16" viewBox="0 0 16 16"><rect x="4.5" y="1.5" width="3.4" height="12.7" fill="#ff0" stroke="#000" stroke-width="1.2"/><path d="M4 8.7h4.5" stroke="#f00" stroke-width="1.6"/><path d="M8 1.5h4" stroke="#800000" stroke-width="1"/></svg>
<div class="t" style="left:1273.5px;top:538.99px;font-size:11px;color:#000;font-weight:400;">Dimensioning</div>
<svg style="position:absolute;left:1256px;top:559px;overflow:visible" width="16" height="16" viewBox="0 0 16 16"><path d="M0.5 9.2c1 1.5 2 3 3 4h4.5c2.5-2.5 4.5-6 5.8-11" fill="none" stroke="#f00" stroke-width="1.6"/><path d="M0 8.2h4.5" stroke="#800000" stroke-width="1.5"/><path d="M8 2h6" stroke="#800000" stroke-width="2"/><rect x="4.5" y="2.2" width="3.2" height="6.3" fill="#ff0" stroke="#000" stroke-width="1.2"/></svg>
<div class="t" style="left:1273.5px;top:560.99px;font-size:11px;color:#000;font-weight:400;">Stability</div>
<div style="position:absolute;left:1247px;top:819px;width:135px;height:20px;background:#d3d3d3"></div>
<div class="t" style="left:1250px;top:823.69px;font-size:11px;color:#000;font-weight:400;">Outputs</div>
<div style="position:absolute;left:1368px;top:831px;width:7px;height:2.5px;background:#111"></div>
<div style="position:absolute;left:1251px;top:843px;width:127px;height:21px;background:#dae6f2;border:1px solid #bcd7f0;box-sizing:border-box"></div>
<svg style="position:absolute;left:1255px;top:846px;" width="16" height="16" viewBox="0 0 16 16"><rect x="0.6" y="0.6" width="14.8" height="14.8" fill="#dde9f5" stroke="#555" stroke-width="1.2"/><g fill="#fff" stroke="#000" stroke-width="1.1"><rect x="3.9" y="3.9" width="1.5" height="2.3"/><rect x="3.9" y="6.8" width="2.4" height="2"/><rect x="3.9" y="9.6" width="4.4" height="2.4"/></g><path d="M11.2 1.8v5.6 M8.4 4.6h5.6" stroke="#090" stroke-width="2"/></svg>
<div class="t" style="left:1273px;top:848.69px;font-size:11px;color:#000;font-weight:400;">Add picture</div>
<div class="t" style="left:1251px;top:871.69px;font-size:11px;color:#000;font-weight:400;">Internal stability :</div>
<div class="t" style="left:1371px;top:871.69px;font-size:11px;color:#000;font-weight:400;">0</div>
<div class="t" style="left:1251px;top:891.69px;font-size:11px;color:#000;font-weight:400;">Total :</div>
<div class="t" style="left:1371px;top:891.69px;font-size:11px;color:#000;font-weight:400;">0</div>
<div style="position:absolute;left:1251px;top:908px;width:127px;height:21px;background:#dae6f2;border:1px solid #bcd7f0;box-sizing:border-box"></div>
<svg style="position:absolute;left:1255px;top:911px;" width="16" height="16" viewBox="0 0 16 16"><rect x="0.6" y="0.6" width="14.8" height="14.8" fill="#dde9f5" stroke="#555" stroke-width="1.2"/><g fill="#fff" stroke="#000" stroke-width="1.1"><rect x="3.9" y="3.9" width="1.5" height="2.3"/><rect x="3.9" y="6.8" width="2.4" height="2"/><rect x="3.9" y="9.6" width="4.4" height="2.4"/></g><path d="M7.5 2.5h1.5 M10 2.5h4 M7.5 4.5h1.5 M10 4.5h4 M7.5 6.5h1.5 M10 6.5h4" stroke="#000" stroke-width="1"/></svg>
<div class="t" style="left:1273px;top:913.19px;font-size:11px;color:#000;font-weight:400;">List of pictures</div>
<div style="position:absolute;left:1253px;top:936px;width:123px;height:1px;background:#a0a0a0"></div>
<div style="position:absolute;left:1251px;top:943px;width:61px;height:41px;background:#dae6f2;border:1px solid #bcd7f0;box-sizing:border-box"></div>
<div style="position:absolute;left:1318px;top:943px;width:60px;height:41px;background:#dae6f2;border:1px solid #bcd7f0;box-sizing:border-box"></div>
<svg style="position:absolute;left:1269px;top:949px;" width="26" height="31" viewBox="0 0 26 31"><rect x="3.3" y="3" width="2" height="4.5" fill="#c8b48a" stroke="#111" stroke-width="0.8"/>
<rect x="20.7" y="3" width="2" height="4.5" fill="#c8b48a" stroke="#111" stroke-width="0.8"/>
<rect x="5.2" y="1.2" width="15.5" height="6.3" rx="0.8" fill="#fff" stroke="#111" stroke-width="1.3"/>
<rect x="1.2" y="7.3" width="23.6" height="12.3" rx="1.2" fill="#c8b48a" stroke="#111" stroke-width="1.3"/>
<circle cx="3.5" cy="9.3" r="0.8" fill="#111"/><path d="M21 9.3h2" stroke="#111" stroke-width="1.2"/>
<rect x="4.5" y="12.8" width="17" height="3.5" fill="#9a9a9a" stroke="#111" stroke-width="1.1"/>
<rect x="5.2" y="16.5" width="15.5" height="13.2" rx="0.6" fill="#fff" stroke="#111" stroke-width="1.3"/><path d="M7.2 19.5h11.5 M7.2 21.5h11.5 M10.2 23.5h8.5 M7.2 25.5h2 M10.2 25.5h8.5" stroke="#111" stroke-width="1.1"/><path d="M11.5 27.5h1 M13.5 27.5h2.5 M16.8 27.5h2" stroke="#111" stroke-width="1.1"/></svg>
<svg style="position:absolute;left:1335px;top:949px;" width="26" height="31" viewBox="0 0 26 31"><rect x="3.3" y="3" width="2" height="4.5" fill="#c8b48a" stroke="#111" stroke-width="0.8"/>
<rect x="20.7" y="3" width="2" height="4.5" fill="#c8b48a" stroke="#111" stroke-width="0.8"/>
<rect x="5.2" y="1.2" width="15.5" height="6.3" rx="0.8" fill="#fff" stroke="#111" stroke-width="1.3"/>
<rect x="1.2" y="7.3" width="23.6" height="12.3" rx="1.2" fill="#c8b48a" stroke="#111" stroke-width="1.3"/>
<circle cx="3.5" cy="9.3" r="0.8" fill="#111"/><path d="M21 9.3h2" stroke="#111" stroke-width="1.2"/>
<rect x="4.5" y="12.8" width="17" height="3.5" fill="#9a9a9a" stroke="#111" stroke-width="1.1"/>
<rect x="5.2" y="16.5" width="15.5" height="13.2" rx="0.6" fill="#fff" stroke="#111" stroke-width="1.3"/><path d="M9 19.5h-1.2v8.5H9" fill="none" stroke="#f00" stroke-width="1.3"/><path d="M10.8 19.5h7.2v8.5h-1.6v-2h-1.6v-2h-1.6v-2h-2.4z" fill="#fff" stroke="#f00" stroke-width="1.3"/></svg>
<div style="position:absolute;left:1251px;top:988px;width:127px;height:21px;background:#dae6f2;border:1px solid #bcd7f0;box-sizing:border-box"></div>
<svg style="position:absolute;left:1254px;top:990px;" width="20" height="19" viewBox="0 0 20 19"><rect x="0.6" y="0.6" width="9.8" height="11" fill="#dde9f5" stroke="#555" stroke-width="1.2"/><g fill="#fff" stroke="#000" stroke-width="1"><rect x="3" y="2.5" width="1.4" height="2"/><rect x="3" y="5" width="2.2" height="1.8"/><rect x="3" y="7.3" width="4" height="2"/></g><path d="M12 5h1.5v4.5 M11.5 8l2 2 2-2" stroke="#090" stroke-width="1.4" fill="none"/><rect x="10.6" y="11.6" width="6.8" height="6" fill="#fff" stroke="#222" stroke-width="1.2"/><path d="M12.5 14h3" stroke="#222" stroke-width="1"/></svg>
<div class="t" style="left:1273px;top:993.19px;font-size:11px;color:#000;font-weight:400;">Copy view</div>
<div style="position:absolute;left:1px;top:741px;width:1243px;height:1px;background:#696969"></div>
<div style="position:absolute;left:1px;top:742px;width:1242px;height:1px;background:#fafafa"></div>
<div style="position:absolute;left:4px;top:748px;width:20px;height:266px;background:#d3d3d3"></div>
<div style="position:absolute;left:16px;top:756px;width:2.5px;height:6px;background:#111"></div>
<div class="t" style="left:8.25px;top:1011px;transform-origin:0 0;transform:rotate(-90deg);font-size:11.5px;color:#000;letter-spacing:-0.112px;">Internal stability</div>
<div style="position:absolute;left:30px;top:754px;width:1203px;height:32px;border:1px solid #a0a0a0;box-shadow:inset 1px 1px 0 #fff, 1px 1px 0 #fff;box-sizing:border-box"></div>
<div style="position:absolute;left:35px;top:758px;width:88px;height:23px;background:#e1e1e1;border:1px solid #adadad;box-sizing:border-box"></div>
<svg style="position:absolute;left:47px;top:762px;" width="14" height="15" viewBox="0 0 14 15"><path d="M1 1l12 6.5L1 14z" fill="#0f0"/><path d="M1 14l12-6.5" stroke="#000" stroke-width="1"/></svg>
<div class="t" style="left:66.5px;top:765.27px;font-size:11.5px;color:#000;font-weight:700;">Analyze</div>
<div style="position:absolute;left:128px;top:756px;width:1px;height:27px;background:#a0a0a0"></div>
<div class="t" style="left:134px;top:767.27px;font-size:11.5px;color:#000;font-weight:700;">Analysis :</div>
<div style="position:absolute;left:221px;top:758px;width:26px;height:24px;background:#dae6f2;border:1px solid #bcd7f0;box-sizing:border-box"></div>
<div style="position:absolute;left:251px;top:758px;width:26px;height:24px;background:#dae6f2;border:1px solid #bcd7f0;box-sizing:border-box"></div>
<svg style="position:absolute;left:226px;top:763px;" width="15" height="15" viewBox="0 0 15 15"><rect x="1" y="1" width="13" height="13" rx="3.5" fill="none" stroke="#1a9a1a" stroke-width="1.2"/><path d="M7.5 3.5v8 M3.5 7.5h8" stroke="#1a9a1a" stroke-width="2"/></svg>
<svg style="position:absolute;left:256px;top:763px;" width="15" height="15" viewBox="0 0 15 15"><rect x="1" y="1" width="13" height="13" rx="3.5" fill="none" stroke="#a01818" stroke-width="1.2"/><path d="M3.5 7.5h8" stroke="#a01818" stroke-width="2.2"/></svg>
<div style="position:absolute;left:281px;top:759px;width:26px;height:22px;background:#c4ddf3;border:1px solid #99c9ef;box-sizing:border-box"></div>
<div class="t" style="left:287px;top:765.34px;font-size:12px;color:#111;font-weight:400;">[1]</div>
<div class="t" style="left:313px;top:765.34px;font-size:12px;color:#111;font-weight:400;">[2]</div>
<div class="t" style="left:339px;top:765.34px;font-size:12px;color:#111;font-weight:400;">[3]</div>
<div style="position:absolute;left:1124px;top:759px;width:103px;height:23px;background:#e1e1e1;border:1px solid #adadad;box-sizing:border-box"></div>
<svg style="position:absolute;left:1146px;top:763px;" width="18" height="18" viewBox="0 0 18 18"><path d="M1.5 4.5h7l3 3v9h-10z" fill="#fff" stroke="#111" stroke-width="1.2"/><path d="M3 12h4 M3 14h5" stroke="#111"/><circle cx="8.5" cy="6.5" r="4.5" fill="#0dd" stroke="#111" stroke-width="1.4"/><path d="M11.5 9.5l4.5 4.5" stroke="#111" stroke-width="2.2"/></svg>
<div class="t" style="left:1165px;top:766.27px;font-size:11.5px;color:#000;font-weight:400;"><u>I</u>n detail</div>
<div style="position:absolute;left:36px;top:793px;width:343px;height:21px;background:#fff;border:1px solid #a8a8a8;box-sizing:border-box"></div>
<div class="t" style="left:39px;top:798.69px;font-size:11px;color:#000;font-weight:400;letter-spacing:0.050px;">Internal stability - straight slip surface</div>
<div style="position:absolute;left:361px;top:796px;width:16px;height:16px;background:#e1e1e1;border:1px solid #adadad;box-sizing:border-box"></div>
<svg style="position:absolute;left:364px;top:801px;" width="10" height="6" viewBox="0 0 10 6"><path d="M0 0h9L4.5 5z" fill="#111"/></svg>
<div style="position:absolute;left:33px;top:829px;width:348px;height:67px;border:1px solid #c8c8c8;box-sizing:border-box"></div>
<div style="position:absolute;left:41px;top:822px;width:210px;height:14px;background:#f0f0f0"></div>
<div style="position:absolute;left:41px;top:824px;width:12px;height:12px;background:#fff;border-style:solid;border-width:2px 1px 1px 2px;border-color:#808080 #e3e3e3 #e3e3e3 #808080;box-sizing:border-box"></div>
<svg style="position:absolute;left:41px;top:824px;" width="12" height="12" viewBox="0 0 12 12"><path d="M3.6 5.2l2.2 3.4 4.6-6" fill="none" stroke="#000" stroke-width="2"/></svg>
<div class="t" style="left:58px;top:825.69px;font-size:11px;color:#000;font-weight:400;">Optimization of slip surface</div>
<div class="t" style="left:42px;top:845.69px;font-size:11px;color:#a0a0a0;font-weight:400;">Nail number:</div>
<div class="t" style="left:42px;top:870.99px;font-size:11px;color:#a0a0a0;font-weight:400;">Angle:</div>
<div style="position:absolute;left:204px;top:842px;width:45px;height:21px;background:#f0f0f0;border:1px solid #a8a8a8;box-sizing:border-box"></div>
<div style="position:absolute;left:204px;top:867px;width:45px;height:21px;background:#f0f0f0;border:1px solid #a8a8a8;box-sizing:border-box"></div>
<div class="t" style="left:237px;top:847.29px;font-size:11px;color:#6d6d6d;font-weight:400;">6</div>
<div class="t" style="left:215px;top:872.29px;font-size:11px;color:#6d6d6d;font-weight:400;">37,00</div>
<div class="t" style="left:253px;top:870.69px;font-size:11px;color:#a0a0a0;font-weight:400;">[°]</div>
<div style="position:absolute;left:383px;top:793px;width:851px;height:215px;border:1px solid #c8c8c8;box-sizing:border-box"></div>
<div style="position:absolute;left:390px;top:786px;width:42px;height:14px;background:#f0f0f0"></div>
<div class="t" style="left:393.5px;top:789.29px;font-size:11px;color:#000;font-weight:400;">Results</div>
<div style="position:absolute;left:392px;top:807px;width:833px;height:190px;background:#fff;border:1px solid #a8a8a8;box-sizing:border-box"></div>
<div style="position:absolute;left:1207px;top:808px;width:17px;height:188px;background:#f0f0f0"></div>
<svg style="position:absolute;left:1209px;top:813px;" width="13" height="9" viewBox="0 0 13 9"><path d="M2.3 7.5l4-4 4 4" fill="none" stroke="#a6a6a6" stroke-width="1.2"/></svg>
<svg style="position:absolute;left:1209px;top:983px;" width="13" height="9" viewBox="0 0 13 9"><path d="M2.3 2l4 4 4-4" fill="none" stroke="#a6a6a6" stroke-width="1.2"/></svg>
<div class="t" style="left:401.5px;top:815.49px;font-size:11px;color:#000;font-weight:700;letter-spacing:0.395px;">Plane slip surface after optimization :</div>
<div class="t" style="left:401.5px;top:828.19px;font-size:11px;color:#000;font-weight:400;letter-spacing:-0.180px;">Slip surface angle</div>
<div class="t" style="left:572px;top:828.19px;font-size:11px;color:#000;font-weight:400;">=</div>
<div class="t" style="left:551.5px;top:828.19px;width:60px;text-align:right;font-size:11px;color:#000">37,00</div>
<div class="t" style="left:617.5px;top:828.19px;font-size:11px;color:#000;font-weight:400;">°</div>
<div class="t" style="left:401.5px;top:840.99px;font-size:11px;color:#000;font-weight:400;letter-spacing:0.043px;">Origin of slip surface at a depth of</div>
<div class="t" style="left:572px;top:840.99px;font-size:11px;color:#000;font-weight:400;">=</div>
<div class="t" style="left:551.5px;top:840.99px;width:60px;text-align:right;font-size:11px;color:#000">7,00</div>
<div class="t" style="left:616.5px;top:840.99px;font-size:11px;color:#000;font-weight:400;">m</div>
<div class="t" style="left:401.5px;top:860.39px;font-size:11px;color:#000;font-weight:700;letter-spacing:0.382px;">Verification :</div>
<div class="t" style="left:401.5px;top:873.39px;font-size:11px;color:#000;font-weight:400;letter-spacing:0.087px;">Gravity force</div>
<div class="t" style="left:623.5px;top:873.39px;font-size:11px;color:#000;font-weight:400;">=</div>
<div class="t" style="left:609.5px;top:873.39px;width:60px;text-align:right;font-size:11px;color:#000">492,22</div>
<div class="t" style="left:673.5px;top:873.39px;font-size:11px;color:#000;font-weight:400;">kN/m</div>
<div class="t" style="left:401.5px;top:886.39px;font-size:11px;color:#000;font-weight:400;letter-spacing:-0.083px;">Overall force carried by nails behind slip surf.</div>
<div class="t" style="left:623.5px;top:886.39px;font-size:11px;color:#000;font-weight:400;">=</div>
<div class="t" style="left:609.5px;top:886.39px;width:60px;text-align:right;font-size:11px;color:#000">127,14</div>
<div class="t" style="left:673.5px;top:886.39px;font-size:11px;color:#000;font-weight:400;">kN/m</div>
<div class="t" style="left:401.5px;top:899.39px;font-size:11px;color:#000;font-weight:400;letter-spacing:0.029px;">Forces on slip surf. driving (grav.force)</div>
<div class="t" style="left:623.5px;top:899.39px;font-size:11px;color:#000;font-weight:400;">=</div>
<div class="t" style="left:609.5px;top:899.39px;width:60px;text-align:right;font-size:11px;color:#000">296,23</div>
<div class="t" style="left:673.5px;top:899.39px;font-size:11px;color:#000;font-weight:400;">kN/m</div>
<div class="t" style="left:401.5px;top:912.39px;font-size:11px;color:#000;font-weight:400;letter-spacing:-0.067px;">Forces on slip surf. driving (pressure)</div>
<div class="t" style="left:623.5px;top:912.39px;font-size:11px;color:#000;font-weight:400;">=</div>
<div class="t" style="left:609.5px;top:912.39px;width:60px;text-align:right;font-size:11px;color:#000">0,00</div>
<div class="t" style="left:673.5px;top:912.39px;font-size:11px;color:#000;font-weight:400;">kN/m</div>
<div class="t" style="left:401.5px;top:925.39px;font-size:11px;color:#000;font-weight:400;letter-spacing:-0.053px;">Forces on slip surf. resist. (soil)</div>
<div class="t" style="left:623.5px;top:925.39px;font-size:11px;color:#000;font-weight:400;">=</div>
<div class="t" style="left:609.5px;top:925.39px;width:60px;text-align:right;font-size:11px;color:#000">363,03</div>
<div class="t" style="left:673.5px;top:925.39px;font-size:11px;color:#000;font-weight:400;">kN/m</div>
<div class="t" style="left:401.5px;top:938.39px;font-size:11px;color:#000;font-weight:400;letter-spacing:-0.052px;">Forces on slip surf. resist. (nails)</div>
<div class="t" style="left:623.5px;top:938.39px;font-size:11px;color:#000;font-weight:400;">=</div>
<div class="t" style="left:609.5px;top:938.39px;width:60px;text-align:right;font-size:11px;color:#000">86,71</div>
<div class="t" style="left:673.5px;top:938.39px;font-size:11px;color:#000;font-weight:400;">kN/m</div>
<div class="t" style="left:401.5px;top:953.99px;font-size:11px;color:#000;font-weight:400;letter-spacing:0.231px;">Factor of safety = 1,52 &gt; 1,20</div>
<div class="t" style="left:401.5px;top:967.09px;font-size:11px;color:#00a000;font-weight:400;letter-spacing:-0.215px;">Stability of slip surface is SATISFACTORY</div>
<div style="position:absolute;left:1px;top:1017px;width:1384px;height:1px;background:#d7d7d7"></div>
<svg style="position:absolute;left:1372px;top:1030px;" width="12" height="12" viewBox="0 0 12 12"><g fill="#bbb"><rect x="8" y="0" width="2" height="2"/><rect x="4" y="4" width="2" height="2"/><rect x="8" y="4" width="2" height="2"/><rect x="0" y="8" width="2" height="2"/><rect x="4" y="8" width="2" height="2"/><rect x="8" y="8" width="2" height="2"/></g></svg>
</body></html>
